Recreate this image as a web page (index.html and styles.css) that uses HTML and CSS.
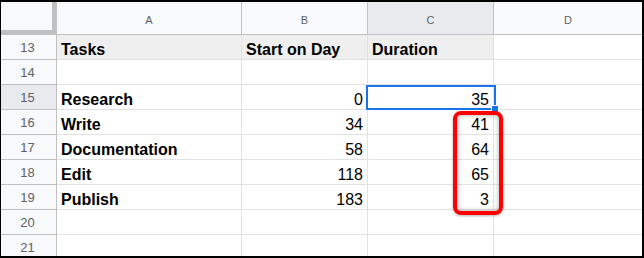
FILE: index.html
```html
<!DOCTYPE html>
<html lang="en">
<head>
    <meta charset="UTF-8">
    <meta name="viewport" content="width=device-width, initial-scale=1.0">
    <title>Tasks</title>
    <link rel="stylesheet" href="styles.css">
</head>
<body>
    <div class="sheet">
        <div class="corner"></div>
        <div class="colhead">A</div>
        <div class="colhead">B</div>
        <div class="colhead active">C</div>
        <div class="colhead last">D</div>

        <div class="rowhead">13</div>
        <div class="cell title">Tasks</div>
        <div class="cell title">Start on Day</div>
        <div class="cell title">Duration</div>
        <div class="cell last"></div>

        <div class="rowhead">14</div>
        <div class="cell"></div>
        <div class="cell"></div>
        <div class="cell"></div>
        <div class="cell last"></div>

        <div class="rowhead active">15</div>
        <div class="cell bold">Research</div>
        <div class="cell num">0</div>
        <div class="cell num anchor">35<div class="selection"><span class="handle"></span></div></div>
        <div class="cell last"></div>

        <div class="rowhead">16</div>
        <div class="cell bold">Write</div>
        <div class="cell num">34</div>
        <div class="cell num anchor">41<div class="callout"></div></div>
        <div class="cell last"></div>

        <div class="rowhead">17</div>
        <div class="cell bold">Documentation</div>
        <div class="cell num">58</div>
        <div class="cell num">64</div>
        <div class="cell last"></div>

        <div class="rowhead">18</div>
        <div class="cell bold">Edit</div>
        <div class="cell num">118</div>
        <div class="cell num">65</div>
        <div class="cell last"></div>

        <div class="rowhead">19</div>
        <div class="cell bold">Publish</div>
        <div class="cell num">183</div>
        <div class="cell num">3</div>
        <div class="cell last"></div>

        <div class="rowhead">20</div>
        <div class="cell"></div>
        <div class="cell"></div>
        <div class="cell"></div>
        <div class="cell last"></div>

        <div class="rowhead">21</div>
        <div class="cell"></div>
        <div class="cell"></div>
        <div class="cell"></div>
        <div class="cell last"></div>
    </div>
</body>
</html>
```

FILE: styles.css
```css
body {
    margin: 0;
    font-family: "Liberation Sans", Arial, sans-serif;
    background: #ffffff;
}

.sheet {
    width: 644px;
    height: 258px;
    box-sizing: border-box;
    border-top: 2px solid #000;
    border-left: 1px solid #000;
    border-right: 2px solid #000;
    border-bottom: 2px solid #000;
    overflow: hidden;
    display: grid;
    grid-template-columns: 56px 185px 126px 126px 1fr;
    grid-template-rows: 33px repeat(9, 25px);
    background: #fff;
}

.sheet > div {
    box-sizing: border-box;
}

.corner {
    background: #f8f9fa;
    border-right: 5px solid #c0c0c0;
    border-bottom: 5px solid #c0c0c0;
}

.colhead {
    background: #f8f9fa;
    border-right: 1px solid #c0c0c0;
    border-bottom: 1px solid #c0c0c0;
    color: #5f6368;
    font-size: 11px;
    display: flex;
    align-items: center;
    justify-content: center;
    padding-top: 3px;
}

.colhead.last {
    border-right: none;
}

.rowhead {
    background: #f8f9fa;
    border-right: 1px solid #c0c0c0;
    border-bottom: 1px solid #c0c0c0;
    color: #5f6368;
    font-size: 13px;
    display: flex;
    align-items: center;
    justify-content: center;
    padding-right: 2px;
}

.colhead.active,
.rowhead.active {
    background: #e8eaed;
}

.cell {
    border-right: 1px solid #e2e2e2;
    border-bottom: 1px solid #e2e2e2;
    font-size: 16px;
    line-height: 18px;
    color: #000;
    display: flex;
    align-items: flex-end;
    padding: 0 4px 0 4px;
    white-space: nowrap;
}

.cell.last {
    border-right: none;
}

.title {
    font-weight: bold;
    background: #efefef;
}

.bold {
    font-weight: bold;
}

.num {
    justify-content: flex-end;
    padding-right: 4px;
}

.anchor {
    position: relative;
}

/* selected cell outline */
.selection {
    position: absolute;
    top: 0;
    left: -2px;
    right: -3px;
    bottom: -1px;
    border: 2px solid #1a73e8;
    z-index: 2;
}

.handle {
    position: absolute;
    right: -5px;
    bottom: -5px;
    width: 6px;
    height: 6px;
    background: #1a73e8;
    border: 1px solid #fff;
}

/* red highlight round the durations */
.callout {
    position: absolute;
    top: 1px;
    left: 85px;
    width: 50px;
    height: 104px;
    box-sizing: border-box;
    border: 4px solid #ff0000;
    border-radius: 8px;
    box-shadow: inset 0 0 5px rgba(0, 0, 0, 0.35), 0 1px 3px rgba(0, 0, 0, 0.3);
    z-index: 3;
}
```
